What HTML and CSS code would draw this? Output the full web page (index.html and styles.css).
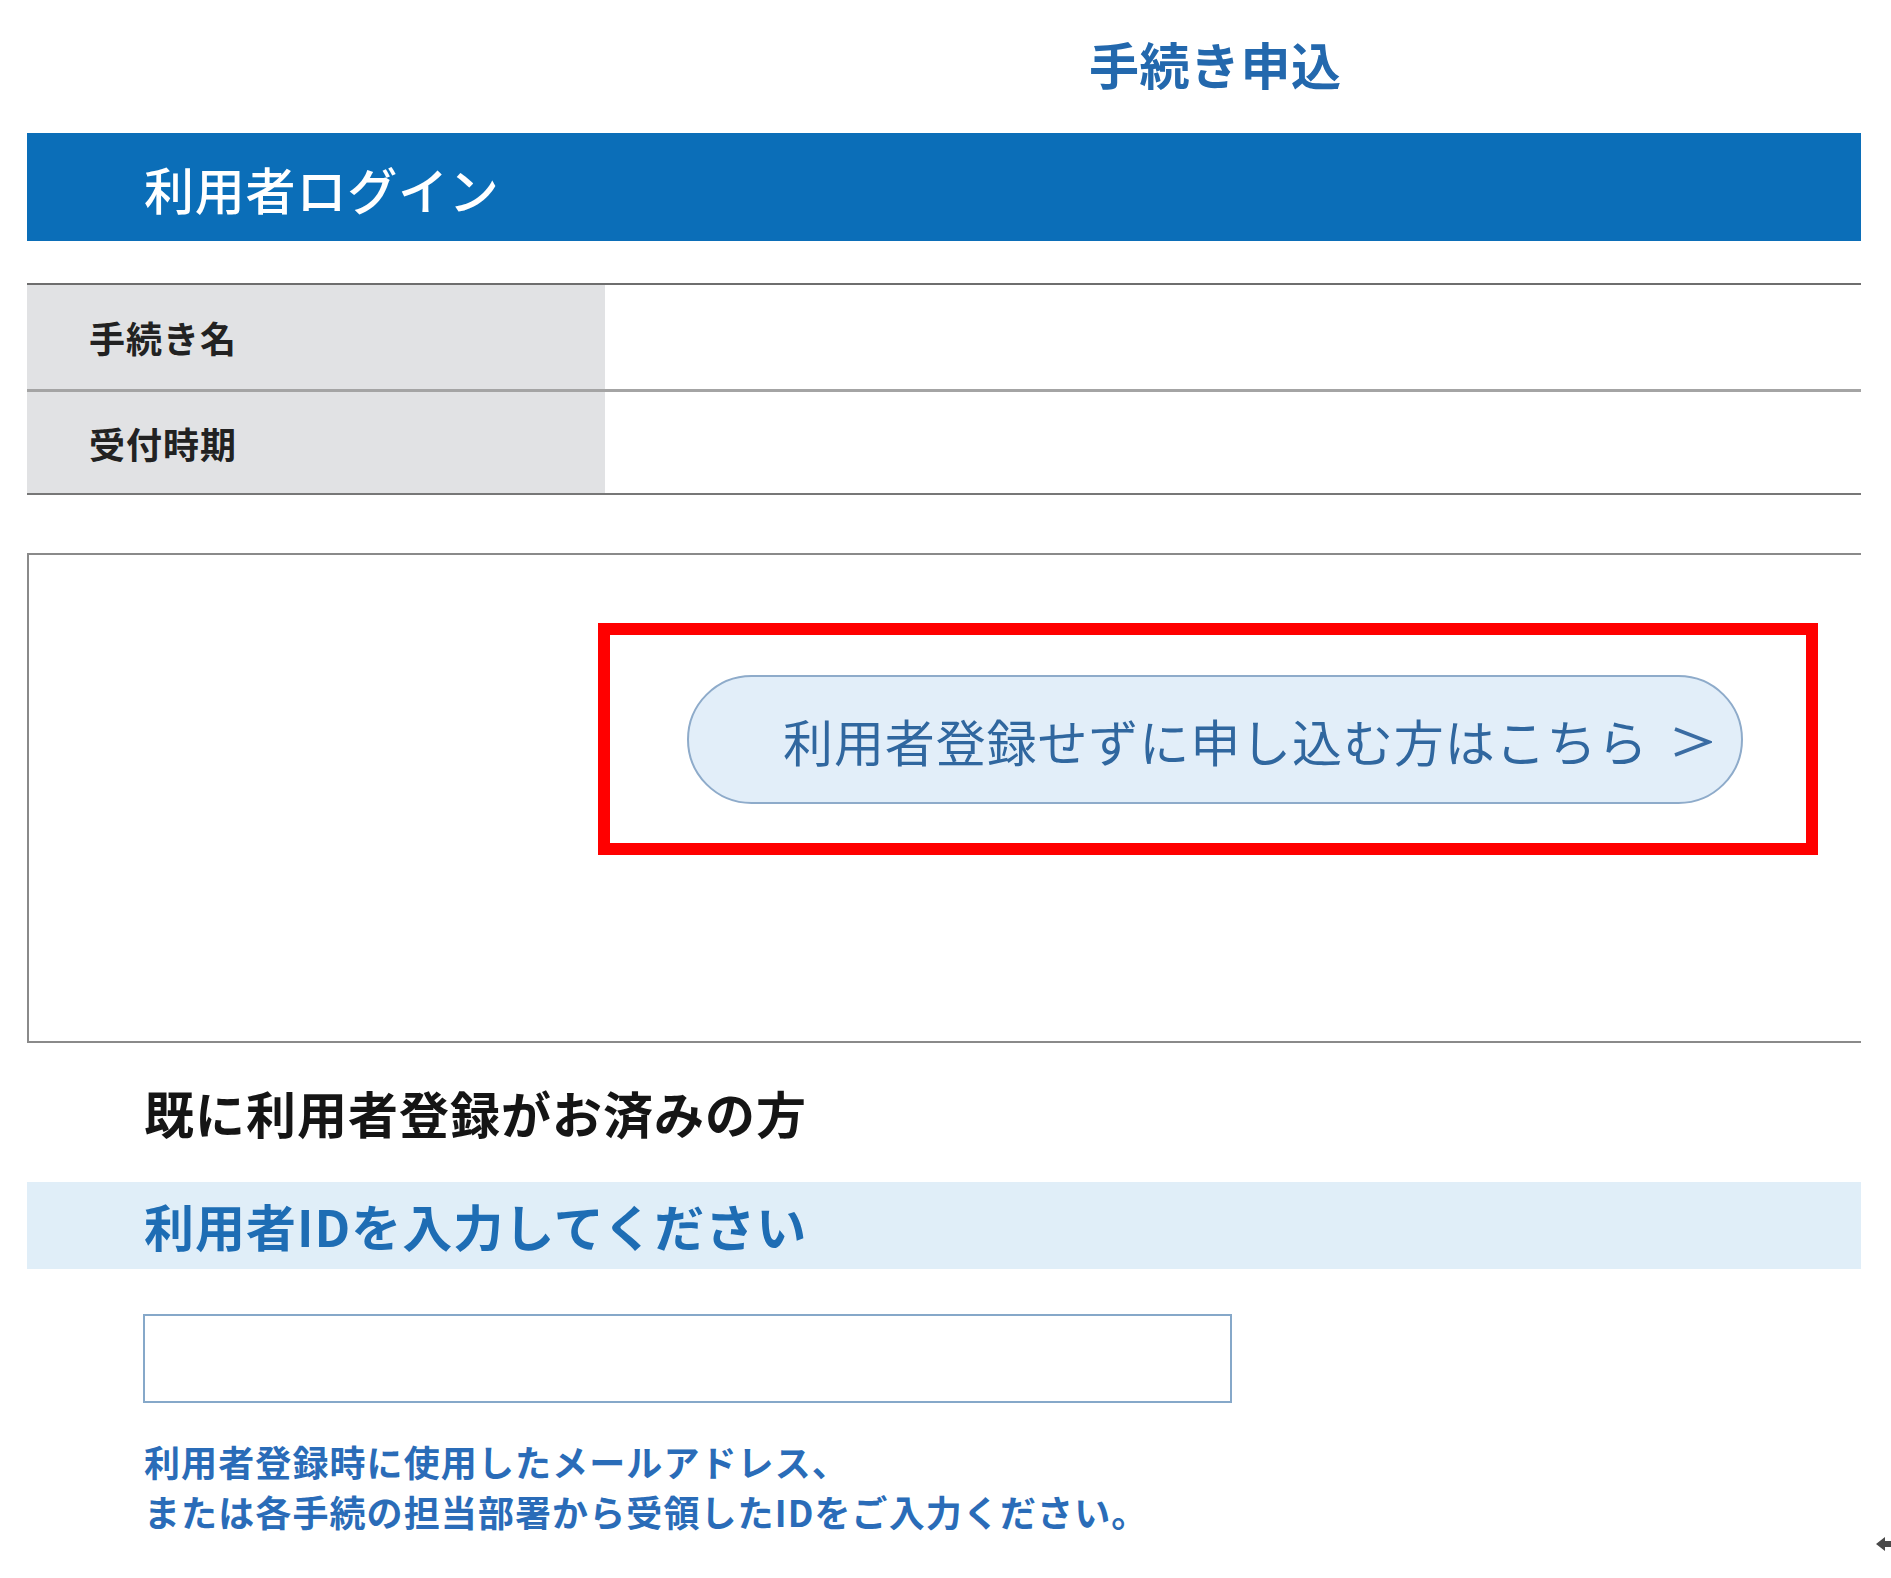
FILE: index.html
```html
<!DOCTYPE html>
<html lang="ja">
<head>
<meta charset="utf-8">
<title>手続き申込</title>
<link rel="stylesheet" href="styles.css">
</head>
<body>
<div class="page">
  <header class="site-head">
    <h1 class="page-title">手続き申込</h1>
  </header>

  <h2 class="section-bar">利用者ログイン</h2>

  <div class="info">
    <div class="info-row">
      <div class="info-label">手続き名</div>
      <div class="info-value"></div>
    </div>
    <div class="info-row">
      <div class="info-label">受付時期</div>
      <div class="info-value"></div>
    </div>
  </div>

  <div class="guest-box">
    <div class="highlight">
      <a class="guest-btn" href="#">
        <span class="guest-text">利用者登録せずに申し込む方はこちら</span>
        <svg class="chev" width="40" height="32" viewBox="0 0 40 32" aria-hidden="true">
          <polyline points="3,3 37,16 3,29" fill="none" stroke="#3a6ca3" stroke-width="3.6" stroke-linejoin="miter"/>
        </svg>
      </a>
    </div>
  </div>

  <h3 class="member-head">既に利用者登録がお済みの方</h3>

  <div class="field-bar">利用者IDを入力してください</div>

  <input class="id-input" type="text" aria-label="利用者ID">

  <p class="help">利用者登録時に使用したメールアドレス、<br>または各手続の担当部署から受領したIDをご入力ください。</p>

  <svg class="corner-arrow" width="15" height="16" viewBox="0 0 15 16" aria-hidden="true">
    <path d="M0 8 L9 1 L9 5 L15 5 L15 11 L9 11 L9 15 Z" fill="#4a4a4a"/>
  </svg>
</div>
</body>
</html>
```

FILE: styles.css
```css
* {
  box-sizing: border-box;
}

html, body {
  margin: 0;
  padding: 0;
  background: #ffffff;
}

body {
  font-family: "Noto Sans CJK JP", "Noto Sans", sans-serif;
  color: #111111;
  width: 1891px;
  min-height: 1578px;
  overflow: hidden;
}

.page {
  position: relative;
  width: 1861px;
  padding-left: 27px;
  min-height: 1578px;
}

.site-head {
  height: 133px;
  padding-top: 33px;
  padding-left: 1062px;
}

.page-title {
  margin: 0;
  font-size: 50px;
  line-height: 60px;
  font-weight: 700;
  color: #2368ad;
  letter-spacing: 0.5px;
}

.section-bar {
  margin: 0;
  height: 108px;
  padding-top: 5px;
  padding-left: 117px;
  background: #0b6eb8;
  color: #ffffff;
  font-size: 50px;
  line-height: 100px;
  font-weight: 500;
  letter-spacing: 0.8px;
}

.info {
  margin-top: 42px;
  border-top: 2px solid #6e6e6e;
}

.info-row {
  display: grid;
  grid-template-columns: 578px 1fr;
  height: 107px;
  border-bottom: 3px solid #a4a4a4;
}

.info-row:last-child {
  height: 103px;
  border-bottom: 2px solid #777777;
}

.info-label {
  background: #e1e2e4;
  padding-left: 62px;
  display: flex;
  align-items: center;
  font-size: 36px;
  font-weight: 700;
  color: #222222;
  letter-spacing: 1px;
}

.guest-box {
  margin-top: 58px;
  border-top: 2px solid #8a8a8a;
  border-left: 2px solid #8a8a8a;
  border-bottom: 2px solid #8a8a8a;
  padding-top: 68px;
  padding-left: 569px;
  padding-bottom: 186px;
}

.highlight {
  width: 1220px;
  border: 12px solid #ff0000;
  padding: 40px 63px 39px 77px;
}

.guest-btn {
  display: flex;
  align-items: center;
  width: 1056px;
  height: 129px;
  padding-left: 94px;
  border: 2px solid #8eabca;
  border-radius: 65px;
  background: #e2eef9;
  text-decoration: none;
}

.guest-text {
  font-size: 50px;
  line-height: 60px;
  font-weight: 400;
  letter-spacing: 0.9px;
  color: #30679f;
}

.chev {
  display: block;
  margin-left: 24px;
  margin-top: 4px;
}

.member-head {
  margin: 39px 0 0;
  padding-left: 117px;
  font-size: 50px;
  line-height: 60px;
  font-weight: 700;
  color: #151515;
  letter-spacing: 1px;
}

.field-bar {
  margin-top: 40px;
  height: 87px;
  padding-top: 3px;
  padding-left: 117px;
  background: #e0eef8;
  color: #1e6db4;
  font-size: 50px;
  line-height: 81px;
  font-weight: 700;
  letter-spacing: 1px;
}

.id-input {
  display: block;
  margin: 45px 0 0 116px;
  width: 1089px;
  height: 89px;
  border: 2px solid #86a8c9;
  background: #ffffff;
  font-family: inherit;
  font-size: 36px;
  padding: 0 16px;
  outline: none;
}

.help {
  margin: 33px 0 0;
  padding-left: 117px;
  font-size: 36px;
  line-height: 50px;
  font-weight: 700;
  color: #2a6cb8;
  letter-spacing: 1.1px;
}

.corner-arrow {
  position: absolute;
  left: 1876px;
  top: 1536px;
}
```
